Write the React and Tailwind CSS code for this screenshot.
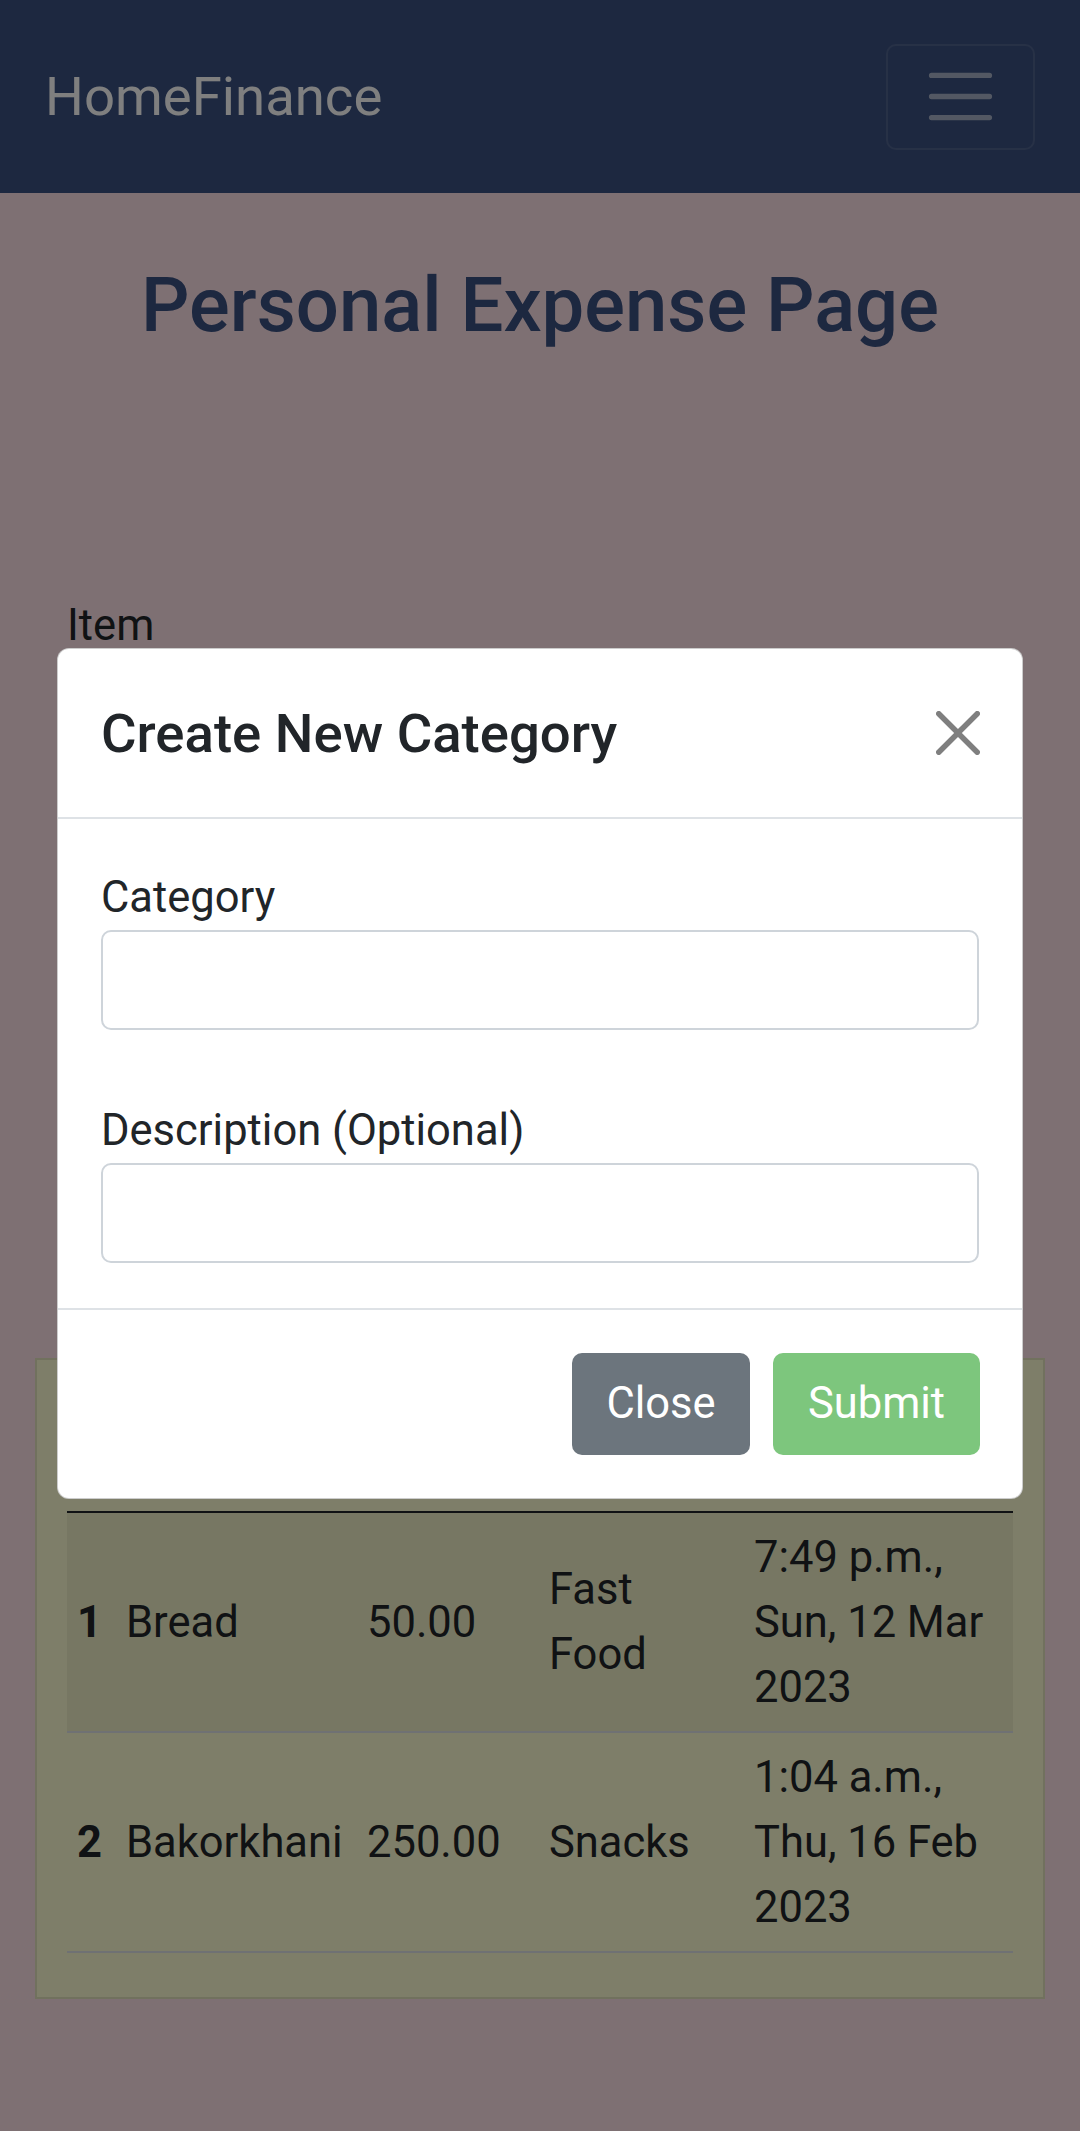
import React from 'react';

const rows = [
    { n: 1, item: 'Bread', amount: '50.00', category: ['Fast', 'Food'], date: ['7:49 p.m.,', 'Sun, 12 Mar', '2023'], striped: true },
    { n: 2, item: 'Bakorkhani', amount: '250.00', category: ['Snacks'], date: ['1:04 a.m.,', 'Thu, 16 Feb', '2023'], striped: false },
];

const Lines = ({ parts }) =>
    parts.map((p, i) => (
        <React.Fragment key={i}>
            {i > 0 && <br />}
            {p}
        </React.Fragment>
    ));

const App = () => {
    return (
        <div className="relative min-h-screen bg-[#fce0e6] font-[Roboto,sans-serif] text-[#212529]">
            {/* Navbar */}
            <nav className="h-[193px] bg-[#3a5080] flex items-center justify-between px-[45px]">
                <span className="text-[54.5px] leading-none text-white">HomeFinance</span>
                <button className="w-[149px] h-[106px] border-2 border-white/10 rounded-[10px] flex items-center justify-center">
                    <svg width="79" height="79" viewBox="0 0 30 30">
                        <path d="M4 7h22M4 15h22M4 23h22" stroke="rgba(255,255,255,.55)" strokeWidth="2" strokeLinecap="round" />
                    </svg>
                </button>
            </nav>

            <h1 className="mt-[66px] text-center text-[76px] leading-[92px] font-medium text-[#3a5080]">Personal Expense Page</h1>

            <div className="px-[35px]">
                {/* Form (behind the modal) */}
                <div className="mt-[242px] h-[765px] px-[32px] overflow-hidden text-[43.5px] leading-[65px]">
                    <label className="block">Item</label>
                    <input className="block w-full h-[100px] border-2 border-[#ced4da] rounded-[10px] bg-white" />
                    <label className="block mt-[42px]">Amount</label>
                    <input className="block w-full h-[100px] border-2 border-[#ced4da] rounded-[10px] bg-white" />
                    <label className="block mt-[42px]">Category</label>
                    <div className="w-full h-[100px] border-2 border-[#ced4da] rounded-[10px] bg-white" />
                </div>

                {/* Expense table card */}
                <div className="border-2 border-black/10 bg-[#fcfcd2] px-[30px] pt-[68px] pb-[44px]">
                    <table className="w-full table-fixed text-[43.5px] text-left">
                        <thead>
                            <tr className="border-b-2 border-[#212529]">
                                <th className="w-[49px] pl-[10px] py-[10px] leading-[63px]">#</th>
                                <th className="w-[241px] pl-[10px] py-[10px] leading-[63px]">Item</th>
                                <th className="w-[182px] pl-[10px] py-[10px] leading-[63px]">Amount</th>
                                <th className="w-[205px] pl-[10px] py-[10px] leading-[63px]">Category</th>
                                <th className="pl-[10px] py-[10px] leading-[63px]">Date</th>
                            </tr>
                        </thead>
                        <tbody>
                            {rows.map((r) => (
                                <tr key={r.n} className={`border-b-2 border-[#dee2e6] ${r.striped ? 'bg-black/5' : ''}`}>
                                    <th className="pl-[10px] py-[11.5px] leading-[65px] align-middle font-bold">{r.n}</th>
                                    <td className="pl-[10px] py-[11.5px] leading-[65px] align-middle">{r.item}</td>
                                    <td className="pl-[10px] py-[11.5px] leading-[65px] align-middle">{r.amount}</td>
                                    <td className="pl-[10px] py-[11.5px] leading-[65px] align-middle"><Lines parts={r.category} /></td>
                                    <td className="pl-[10px] py-[11.5px] leading-[65px] align-middle"><Lines parts={r.date} /></td>
                                </tr>
                            ))}
                        </tbody>
                    </table>
                </div>
            </div>

            {/* Modal backdrop + dialog */}
            <div className="absolute inset-0 bg-black/50">
                <div className="mx-[57px] mt-[648px] bg-white border border-black/20 rounded-[12px]">
                    {/* Header */}
                    <div className="flex items-center justify-between pl-[43px] pr-[42px] py-[43px] border-b-2 border-[#dee2e6]">
                        <h5 className="text-[54.5px] leading-[82px] font-medium">Create New Category</h5>
                        <svg width="44" height="44" viewBox="0 0 16 16" fill="#000" fillOpacity="0.5">
                            <path d="M.293.293a1 1 0 011.414 0L8 6.586 14.293.293a1 1 0 111.414 1.414L9.414 8l6.293 6.293a1 1 0 01-1.414 1.414L8 9.414l-6.293 6.293a1 1 0 01-1.414-1.414L6.586 8 .293 1.707a1 1 0 010-1.414z" />
                        </svg>
                    </div>

                    {/* Body */}
                    <div className="px-[43px] pt-[46px] pb-[45px] text-[43.5px] leading-[65px]">
                        <label className="block">Category</label>
                        <input className="block w-full h-[100px] border-2 border-[#ced4da] rounded-[10px] px-[31px] outline-none" />
                        <label className="block mt-[68px]">Description (Optional)</label>
                        <input className="block w-full h-[100px] border-2 border-[#ced4da] rounded-[10px] px-[31px] outline-none" />
                    </div>

                    {/* Footer */}
                    <div className="flex justify-end gap-[23px] px-[42px] pt-[43px] pb-[43px] border-t-2 border-[#dee2e6]">
                        <button className="w-[178px] h-[102px] rounded-[10px] bg-[#6c757d] text-white text-[43.5px]">Close</button>
                        <button className="w-[207px] h-[102px] rounded-[10px] bg-[#7dc67d] text-white text-[43.5px]">Submit</button>
                    </div>
                </div>
            </div>
        </div>
    );
};

export default App;
